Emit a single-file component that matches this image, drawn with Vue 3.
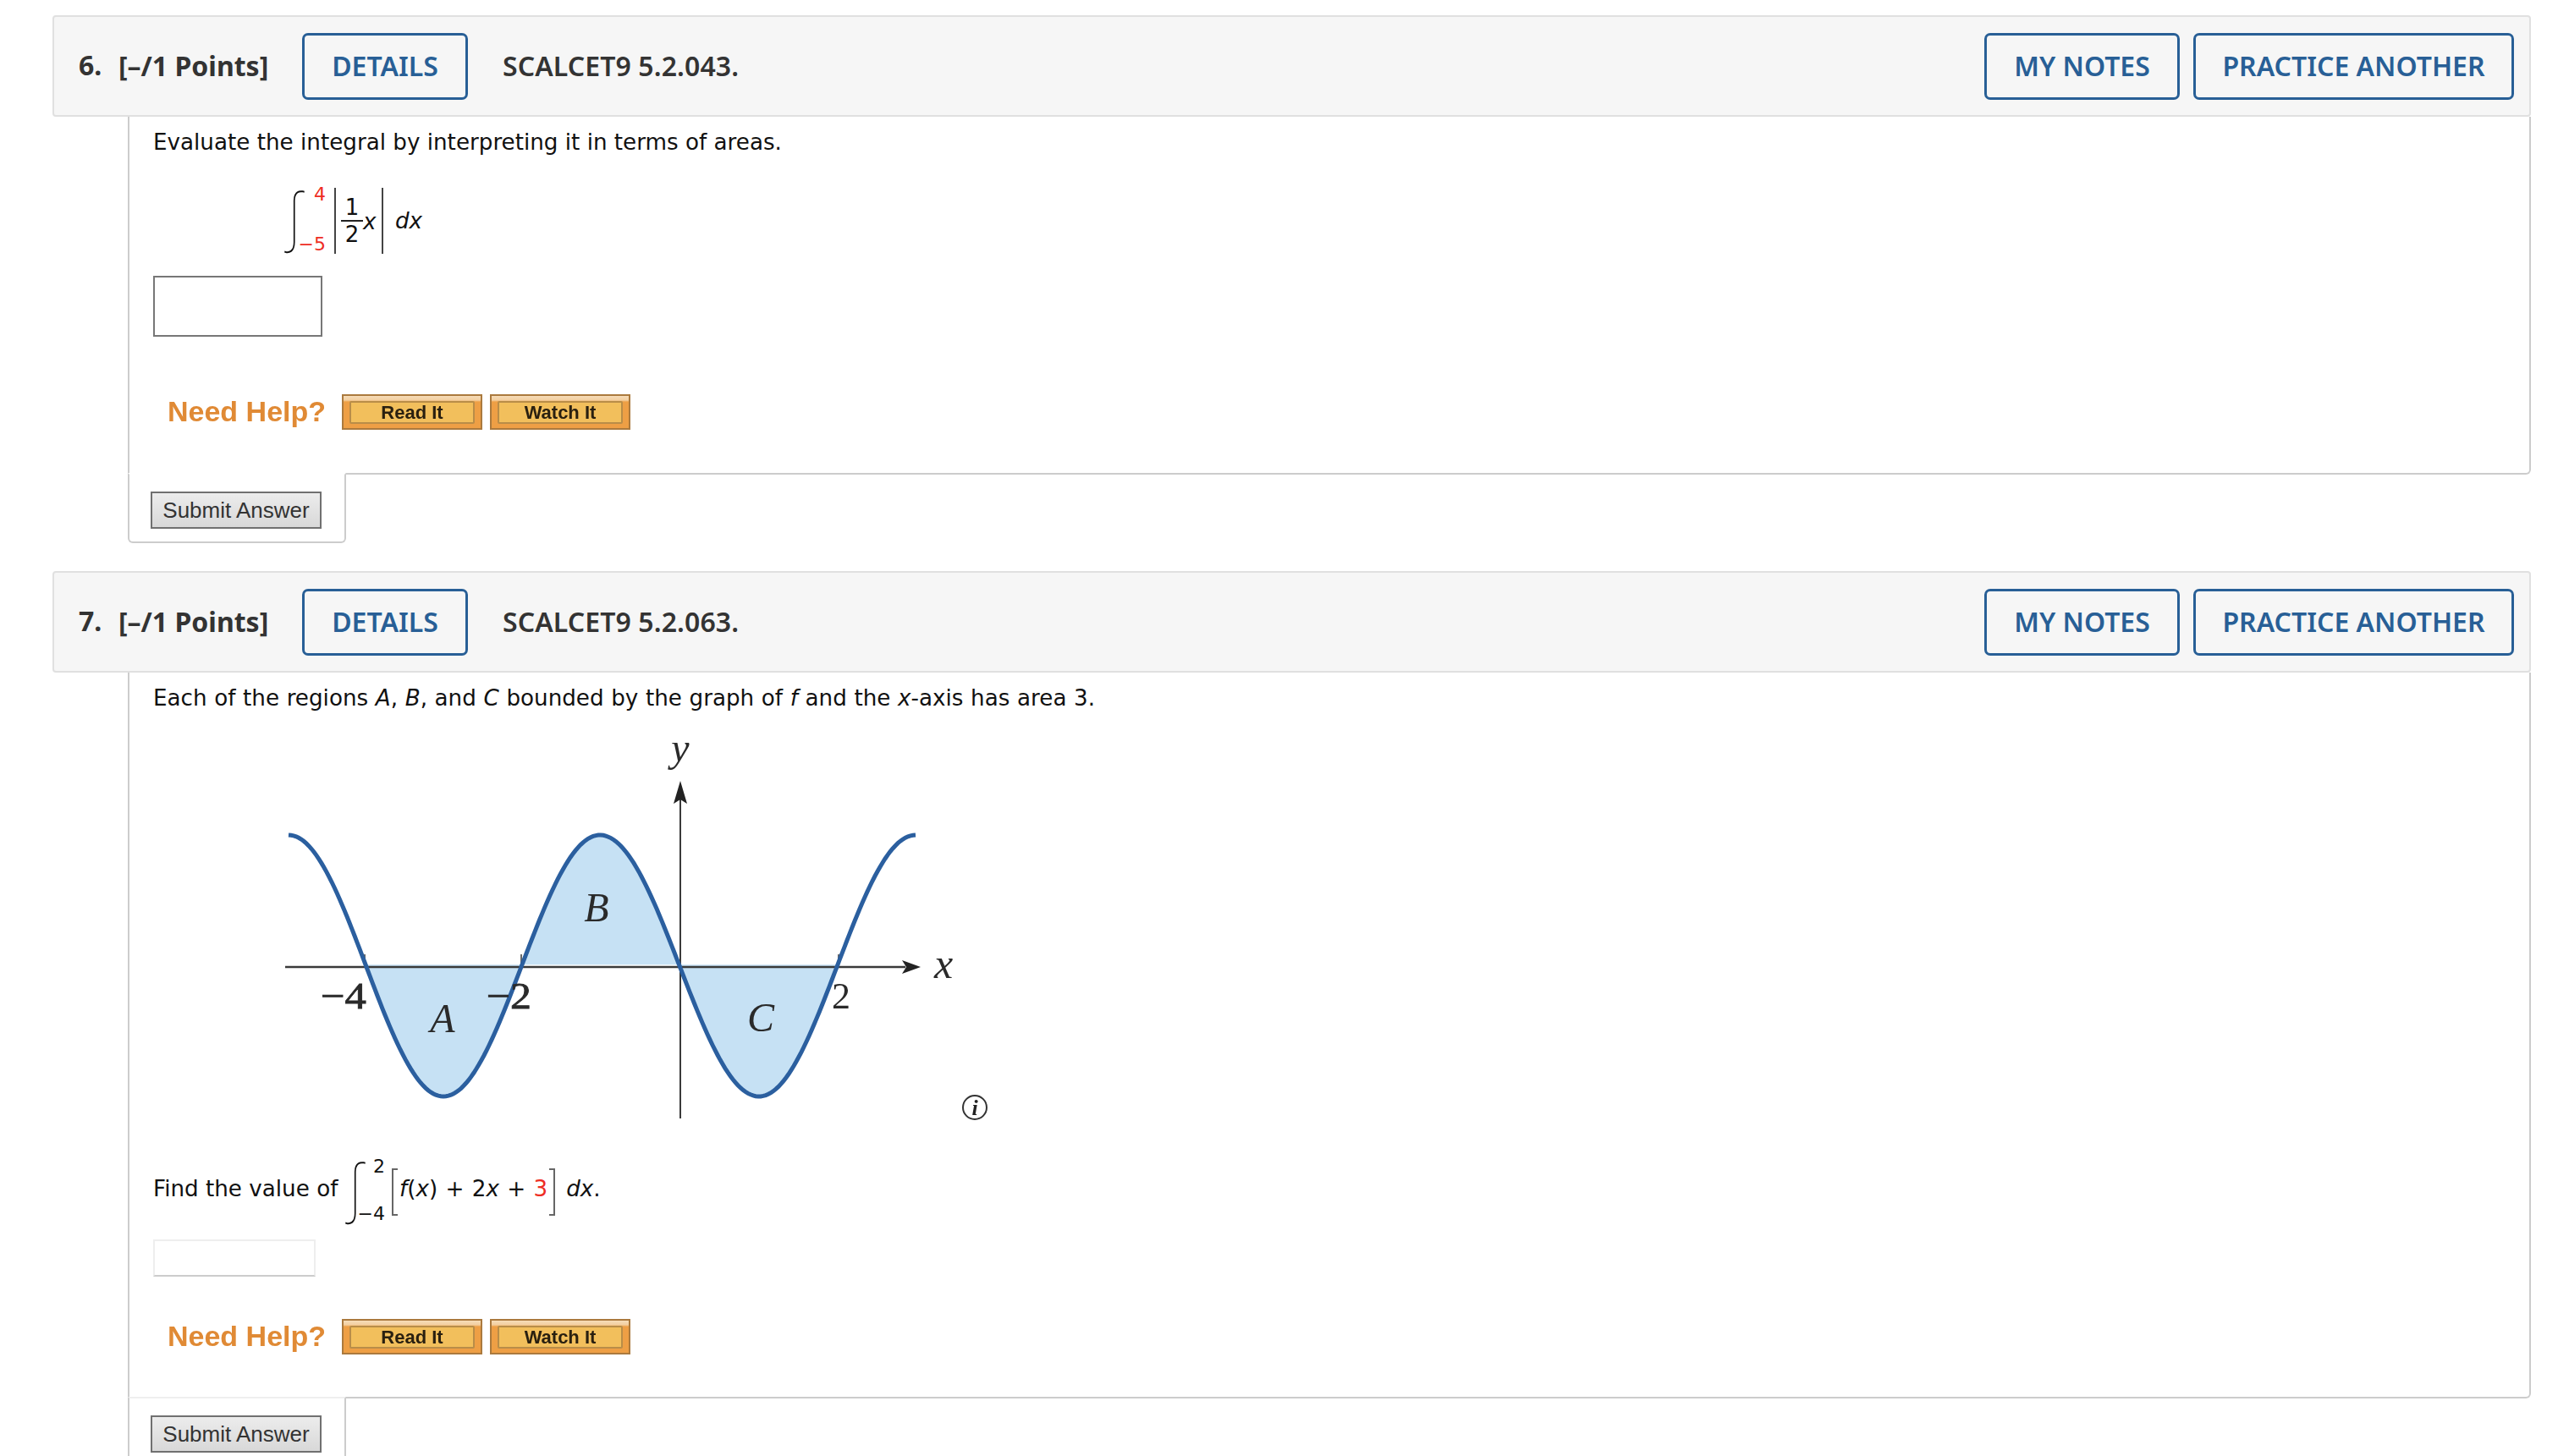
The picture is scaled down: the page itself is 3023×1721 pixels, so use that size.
<script setup>
const ext = [[341, 987], [524, 1296], [709, 987], [897, 1296], [1082, 987]]
function curveY(x) {
  for (let i = 0; i < ext.length - 1; i++) {
    const [x0, y0] = ext[i]
    const [x1, y1] = ext[i + 1]
    if (x <= x1) {
      const t = (x - x0) / (x1 - x0)
      return y0 + (y1 - y0) * (1 - Math.cos(Math.PI * t)) / 2
    }
  }
  return 987
}
function sample(a, b) {
  const pts = []
  for (let x = a; x <= b; x += 3) pts.push(`${x} ${curveY(x).toFixed(1)}`)
  return pts
}
const curve = 'M' + sample(341, 1082).join(' L')
const area = 'M' + sample(432, 990).join(' L') + ' Z'
</script>

<template>
  <div class="page">
    <section class="question">
      <header class="qhead">
        <span class="num">6.</span>
        <span class="points">[–/1 Points]</span>
        <a class="btn details">DETAILS</a>
        <span class="code">SCALCET9 5.2.043.</span>
        <a class="btn notes">MY NOTES</a>
        <a class="btn practice">PRACTICE ANOTHER</a>
      </header>
      <div class="panel">
        <p class="prompt">Evaluate the integral by interpreting it in terms of areas.</p>
        <div class="formula first">
          <span class="integral">∫</span>
          <span class="limits narrow"><span class="red">4</span><span class="red">−5</span></span>
          <span class="bar"></span>
          <span class="frac"><span>1</span><span class="over">2</span></span>
          <i class="var">x</i>
          <span class="bar second"></span>
          <i class="dx">dx</i>
        </div>
        <div class="answer"></div>
        <div class="help">
          <span class="need">Need Help?</span>
          <span class="orange"><span>Read It</span></span>
          <span class="orange"><span>Watch It</span></span>
        </div>
      </div>
      <div class="tab">
        <span class="submit">Submit Answer</span>
      </div>
    </section>

    <section class="question">
      <header class="qhead">
        <span class="num">7.</span>
        <span class="points">[–/1 Points]</span>
        <a class="btn details">DETAILS</a>
        <span class="code">SCALCET9 5.2.063.</span>
        <a class="btn notes">MY NOTES</a>
        <a class="btn practice">PRACTICE ANOTHER</a>
      </header>
      <div class="panel lower">
        <p class="prompt">Each of the regions <i>A</i>, <i>B</i>, and <i>C</i> bounded by the graph of <i>f</i> and the <i>x</i>-axis has area 3.</p>
        <svg class="graph" viewBox="320 850 860 480" width="860" height="480">
          <path :d="area" fill="#c6e1f4" />
          <g stroke="#3a3a3a" fill="none">
            <path d="M337 1143H1070" stroke-width="2.5" />
            <path d="M804 940V1322" stroke-width="2" />
            <path d="M431 1128V1143M616 1128V1143M991 1128V1143" stroke-width="1.5" />
          </g>
          <path d="M1088 1143L1066 1135L1071 1143L1066 1151Z" fill="#222" />
          <path d="M804 923L796 950L804 945L812 950Z" fill="#222" />
          <path :d="curve" fill="none" stroke="#2b5f9f" stroke-width="5" />
          <g class="glabel">
            <text x="804" y="900" text-anchor="middle" class="it" font-size="48">y</text>
            <text x="1115" y="1156" text-anchor="middle" class="it" font-size="50">x</text>
            <text x="379" y="1192" font-size="44" class="thick" textLength="54" lengthAdjust="spacingAndGlyphs">−4</text>
            <text x="575" y="1192" font-size="44" class="thick" textLength="53" lengthAdjust="spacingAndGlyphs">−2</text>
            <text x="983" y="1192" font-size="44">2</text>
            <text x="523" y="1220" text-anchor="middle" class="it" font-size="48">A</text>
            <text x="705" y="1089" text-anchor="middle" class="it" font-size="48">B</text>
            <text x="899" y="1219" text-anchor="middle" class="it" font-size="48">C</text>
          </g>
          <circle cx="1152" cy="1309" r="14" fill="none" stroke="#333" stroke-width="2" />
          <text x="1152" y="1318" text-anchor="middle" class="info">i</text>
        </svg>
        <div class="formula find">
          <span class="findtext">Find the value of</span>
          <span class="integral">∫</span>
          <span class="limits"><span>2</span><span>−4</span></span>
          <span class="bracket"></span>
          <span class="expr"><i>f</i>(<i>x</i>) + 2<i>x</i> + <span class="red">3</span></span>
          <span class="bracket right"></span>
          <span class="dx after"><i>dx</i>.</span>
        </div>
        <div class="answer soft"></div>
        <div class="help">
          <span class="need">Need Help?</span>
          <span class="orange"><span>Read It</span></span>
          <span class="orange"><span>Watch It</span></span>
        </div>
      </div>
      <div class="tab faint">
        <span class="submit">Submit Answer</span>
      </div>
    </section>
  </div>
</template>

<style>
html, body { margin: 0; background: #fff; overflow: hidden; }
</style>

<style scoped>
.page {
  height: 1721px;
  overflow: hidden;
  padding-top: 18px;
  box-sizing: border-box;
  background: #fff;
  font-family: "Noto Sans", "Open Sans", sans-serif;
}
.question { margin: 0 32px 33px 62px; }
.qhead {
  display: flex;
  align-items: center;
  height: 120px;
  box-sizing: border-box;
  padding: 0 18px 0 29px;
  background: #f6f6f6;
  border: 2px solid #e0e0e0;
  border-radius: 4px;
  font-size: 32px;
  font-weight: 600;
  color: #333;
}
.num { width: 47px; font-weight: 700; margin-bottom: 3px; }
.points { width: 217px; font-weight: 700; margin-bottom: 1px; }
.code { margin-left: 41px; margin-right: auto; margin-bottom: 1px; letter-spacing: 0.1px; }
.btn {
  display: flex;
  align-items: center;
  justify-content: center;
  height: 79px;
  padding-bottom: 2px;
  box-sizing: border-box;
  border: 3.5px solid #285f96;
  border-radius: 7px;
  color: #285f96;
}
.details { width: 196px; }
.notes { width: 231px; margin-right: 16px; }
.practice { width: 379px; }
.panel {
  margin-left: 89px;
  padding: 13px 0 51px 28px;
  border: 2px solid #ccc;
  border-top: 0;
  border-radius: 0 0 6px 0;
  font-family: "DejaVu Sans", Verdana, sans-serif;
  font-size: 26.2px;
  color: #111;
}
.lower { padding-bottom: 50px; }
.lower .prompt { word-spacing: 0.3px; }
.prompt { margin: 0; line-height: 34px; }
.formula {
  display: flex;
  align-items: center;
  height: 78px;
  margin-top: 37px;
}
.first { padding-left: 156px; }
.integral {
  width: 16px;
  height: 78px;
  line-height: 78px;
  font-family: Roboto, sans-serif;
  font-weight: 100;
  font-size: 76px;
  color: #111;
  white-space: nowrap;
  transform: translate(4px, -4px) scaleX(0.85);
  transform-origin: left center;
}
.limits {
  display: flex;
  flex-direction: column;
  justify-content: space-between;
  align-items: flex-end;
  align-self: stretch;
  width: 30px;
  padding-bottom: 3px;
  box-sizing: border-box;
  font-size: 22px;
  line-height: 16px;
}
.narrow { width: 32px; margin-right: 10px; }
.red { color: #ee2d24; }
.bar {
  width: 2px;
  height: 78px;
  background: #444;
  margin-right: 6px;
}
.second { margin: 0 0 0 6px; }
.frac {
  display: flex;
  flex-direction: column;
  align-items: center;
  width: 26px;
  font-size: 26px;
  line-height: 30px;
}
.over { border-top: 2px solid #222; width: 100%; text-align: center; }
.var { width: 16px; margin-top: 2px; }
.dx { margin-left: 14px; }
.answer {
  width: 200px;
  height: 72px;
  box-sizing: border-box;
  margin-top: 26px;
  border: 2px solid #777;
}
.soft {
  width: 192px;
  height: 44px;
  margin-top: 19px;
  border: 2px solid #eee;
  border-bottom-color: #ccc;
}
.help {
  display: flex;
  align-items: center;
  height: 42px;
  margin: 68px 0 0 17px;
}
.lower .help { margin-top: 50px; }
.need {
  width: 206px;
  margin-bottom: 2px;
  font-family: "Liberation Sans", Arial, sans-serif;
  font-size: 34px;
  font-weight: 700;
  color: #e08a35;
  filter: blur(0.6px);
}
.orange {
  display: flex;
  width: 166px;
  height: 42px;
  box-sizing: border-box;
  margin-right: 9px;
  padding: 6px 7px 5px;
  border: 2px solid #ab7a3e;
  background: linear-gradient(#f6dcb8 0, #f3cfa0 5px, #ee9f45 7px);
}
.orange span {
  flex: 1;
  display: flex;
  align-items: center;
  justify-content: center;
  border: 2px solid #b98d48;
  border-radius: 2px;
  background: #f2bf5c;
  font-family: "Liberation Sans", Arial, sans-serif;
  font-size: 22px;
  font-weight: 700;
  color: #2a2010;
  filter: blur(0.4px);
}
.tab {
  position: relative;
  width: 258px;
  margin: -2px 0 0 89px;
  padding: 20px 0 15px 25px;
  box-sizing: border-box;
  background: #fff;
  border: 2px solid #ccc;
  border-top: 2px solid #fff;
  border-radius: 0 0 6px 6px;
}
.faint { border-top-color: #efefef; }
.submit {
  display: flex;
  align-items: center;
  justify-content: center;
  width: 202px;
  height: 44px;
  box-sizing: border-box;
  border: 2px solid #707070;
  background: linear-gradient(#ececec, #d8d8d8);
  font-family: "Liberation Sans", Arial, sans-serif;
  font-size: 26px;
  color: #333;
}
.graph {
  display: block;
  margin: 8px 0 0 139px;
  filter: blur(0.5px);
}
.glabel text {
  font-family: "Liberation Serif", serif;
  fill: #2a2a2a;
}
.glabel .it { font-style: italic; }
.glabel .thick { stroke: #2a2a2a; stroke-width: 0.8px; }
.info {
  font-family: "Liberation Serif", serif;
  font-style: italic;
  font-weight: 700;
  font-size: 26px;
  fill: #222;
}
.find {
  height: 75px;
  margin-top: 41px;
}
.findtext { width: 228px; margin-bottom: 8px; }
.limits:not(.narrow) { margin-right: 8px; }
.bracket {
  width: 7px;
  height: 56px;
  box-sizing: border-box;
  border: 2px solid #666;
  border-right: 0;
  margin-right: 2px;
}
.right {
  border: 2px solid #666;
  border-left: 0;
  margin: 0 0 0 2px;
}
.expr { white-space: pre; word-spacing: 1px; margin-bottom: 8px; }
.after { margin-left: 13px; margin-bottom: 8px; }
</style>
